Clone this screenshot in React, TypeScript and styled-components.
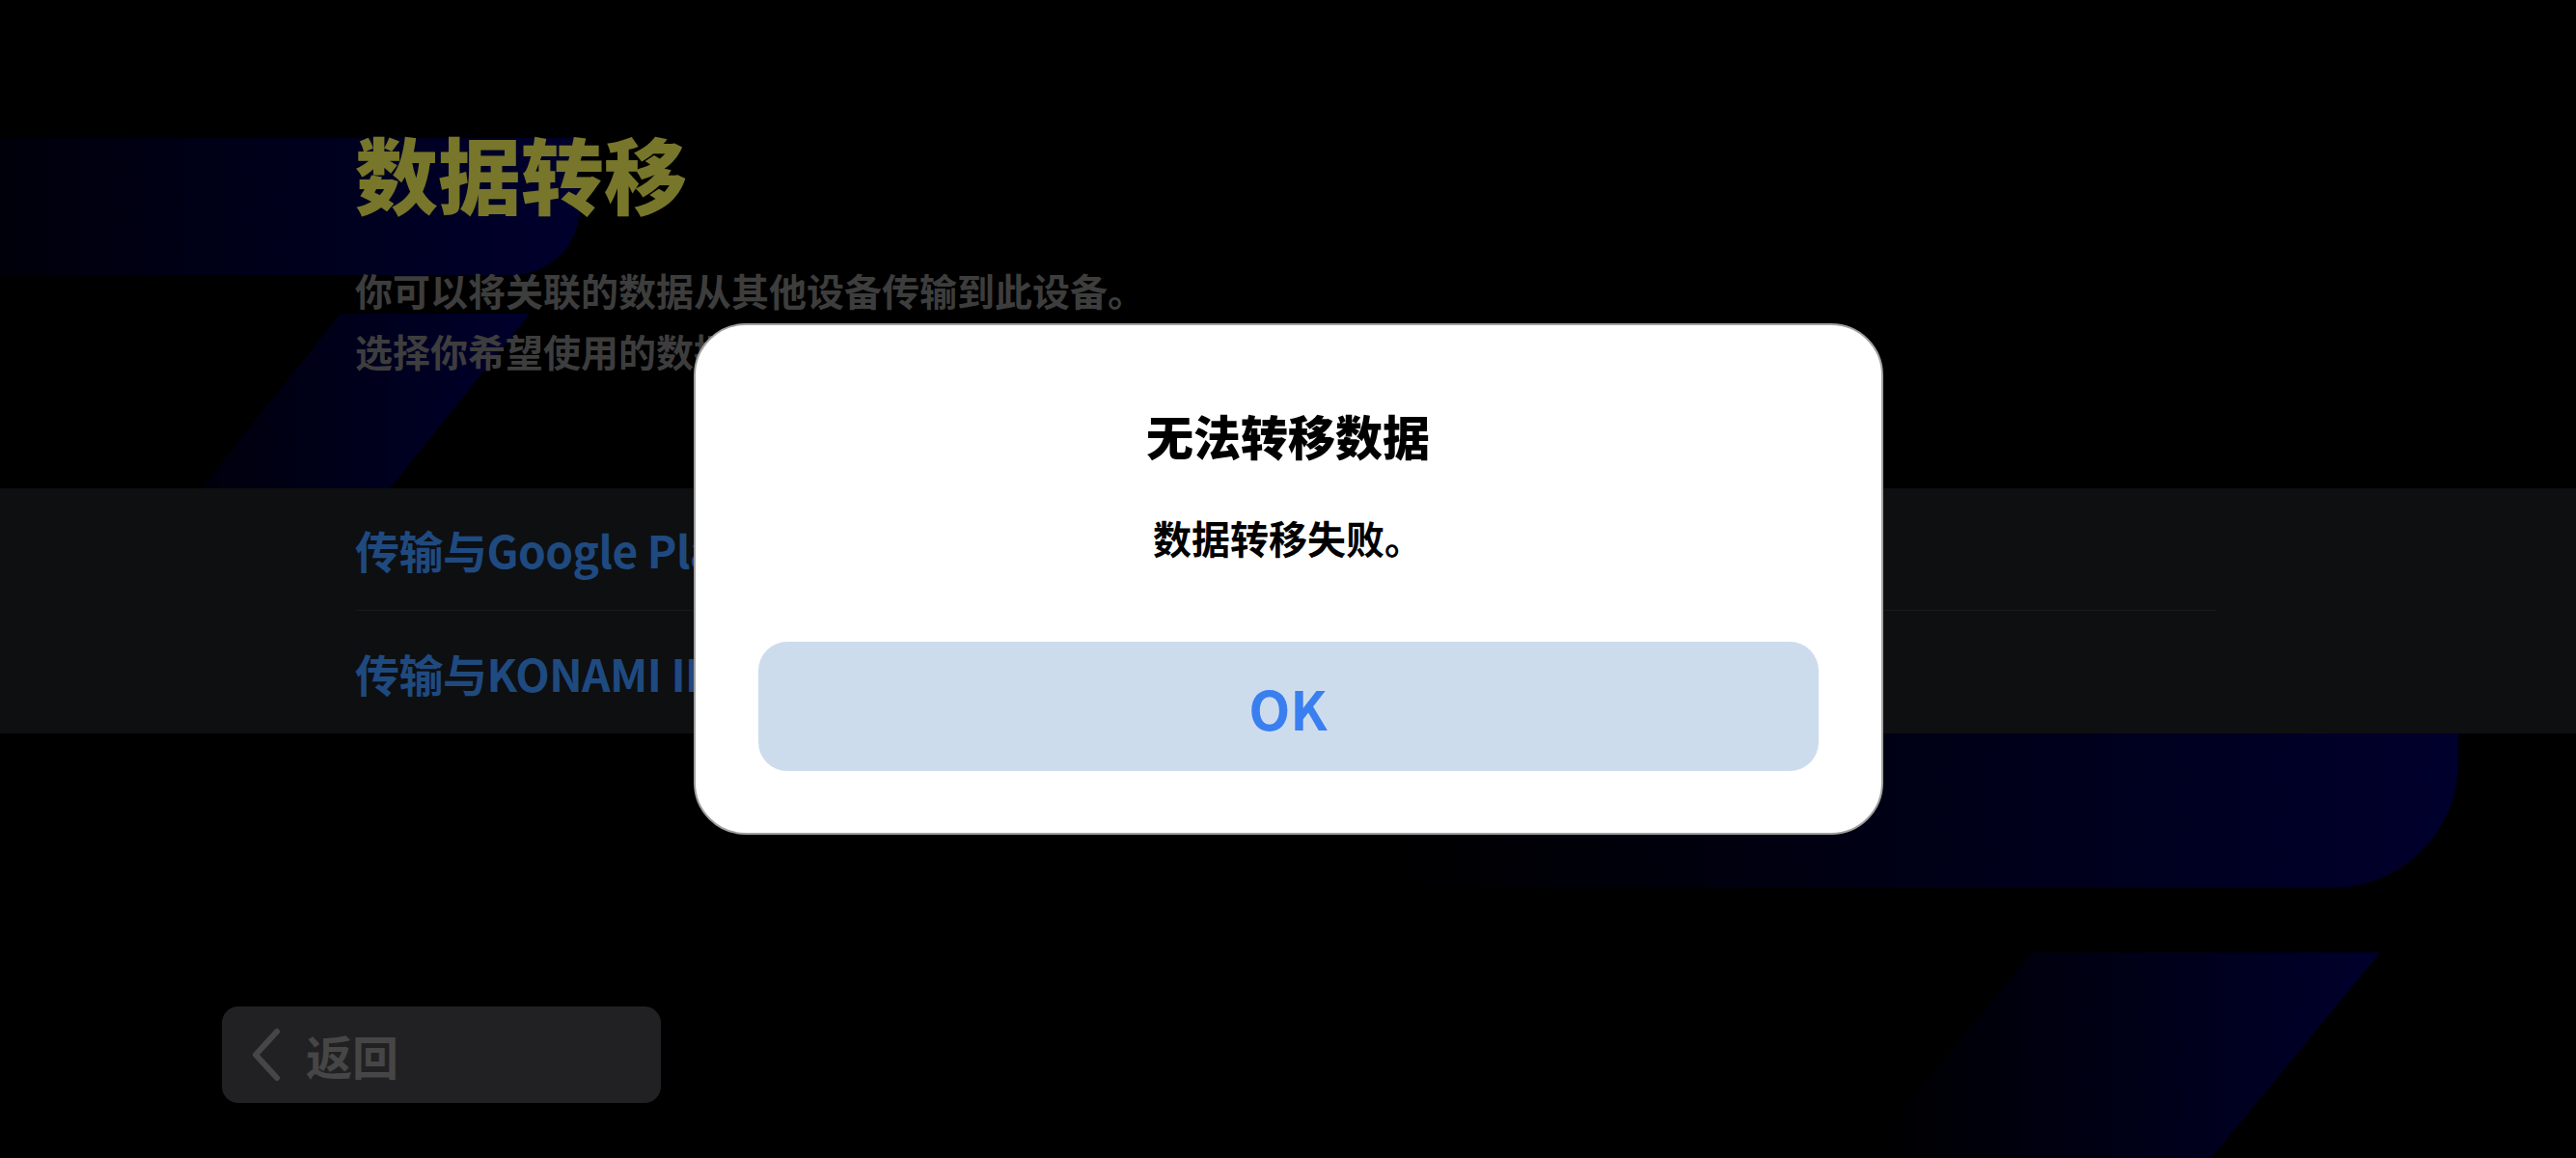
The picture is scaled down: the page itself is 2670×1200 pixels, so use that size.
import React from 'react'
import styled, { createGlobalStyle } from 'styled-components'

const GlobalStyle = createGlobalStyle`
  html, body {
    margin: 0;
    padding: 0;
    background: #000;
  }
  body {
    font-family: 'Noto Sans CJK SC', 'Noto Sans', sans-serif;
  }
  * {
    box-sizing: border-box;
  }
`

const options = ['传输与Google Play 游戏', '传输与KONAMI ID']

const App: React.FC = () => {
  return (
    <Screen>
      <GlobalStyle />
      <Backdrop viewBox="0 0 2670 1200" preserveAspectRatio="none">
        <defs>
          <linearGradient id="navyTop" x1="0" y1="0" x2="1" y2="0">
            <stop offset="0" stopColor="#000016" />
            <stop offset="1" stopColor="#00005a" />
          </linearGradient>
          <linearGradient id="navyBottom" x1="0" y1="0" x2="1" y2="0">
            <stop offset="0" stopColor="#000000" />
            <stop offset="1" stopColor="#00005a" />
          </linearGradient>
        </defs>
        {/* big "7" marks behind the page */}
        <path d="M0 143 H601 V215 A70 70 0 0 1 531 285 H0 Z" fill="url(#navyTop)" />
        <path d="M353 325 H549 L393 520 H197 Z" fill="url(#navyTop)" />
        <path d="M1420 640 H2548 V790 A130 130 0 0 1 2418 920 H1420 Z" fill="url(#navyBottom)" />
        <path d="M2106 987 H2467 L2292 1200 H1931 Z" fill="url(#navyBottom)" />
      </Backdrop>

      <Page>
        <Header>
          <Title>数据转移</Title>
          <Description>
            你可以将关联的数据从其他设备传输到此设备。
            <br />
            选择你希望使用的数据传输方式。
          </Description>
        </Header>

        <Band>
          <OptionList>
            {options.map((label, i) => (
              <Option key={label} $first={i === 0}>
                {label}
              </Option>
            ))}
          </OptionList>
        </Band>

        <Footer>
          <BackButton>
            <svg width="32" height="56" viewBox="0 0 32 56">
              <path
                d="M28 4 L6 28 L28 52"
                fill="none"
                stroke="currentColor"
                strokeWidth="6"
                strokeLinecap="round"
                strokeLinejoin="round"
              />
            </svg>
            <span>返回</span>
          </BackButton>
        </Footer>
      </Page>

      <Overlay>
        <Dialog>
          <DialogTitle>无法转移数据</DialogTitle>
          <DialogMessage>数据转移失败。</DialogMessage>
          <OkButton>OK</OkButton>
        </Dialog>
      </Overlay>
    </Screen>
  )
}

const Screen = styled.div`
  position: relative;
  width: 2670px;
  height: 1200px;
  overflow: hidden;
  background: #000;
`

const Backdrop = styled.svg`
  position: absolute;
  inset: 0;
  width: 100%;
  height: 100%;
`

const Page = styled.div`
  position: relative;
  display: flex;
  flex-direction: column;
  height: 100%;
`

const Header = styled.header`
  padding: 127px 0 0 368px;
`

const Title = styled.h1`
  margin: 0;
  font-size: 86px;
  line-height: 103px;
  font-weight: 900;
  color: #eeec54;
`

const Description = styled.p`
  margin: 39px 0 0;
  font-size: 39px;
  line-height: 63px;
  font-weight: 700;
  color: #7a7a7a;
`

const Band = styled.section`
  margin-top: 111px;
  background: #1c1e22;
`

const OptionList = styled.div`
  margin: 0 373px 0 368px;
`

const Option = styled.div<{ $first?: boolean }>`
  display: flex;
  align-items: center;
  height: ${(p) => (p.$first ? 126 : 128)}px;
  border-top: ${(p) => (p.$first ? 'none' : '1px solid #303238')};
  font-size: 46px;
  font-weight: 700;
  letter-spacing: -0.5px;
  color: #3e94ff;
`

const Footer = styled.footer`
  margin-top: 283px;
  padding-left: 230px;
`

const BackButton = styled.button`
  display: flex;
  align-items: center;
  gap: 26px;
  width: 455px;
  height: 100px;
  padding: 0 0 0 29px;
  border: none;
  border-radius: 17px;
  background: #424246;
  color: #8c8c8c;
  font-family: inherit;
  font-size: 48px;
  font-weight: 700;
`

const Overlay = styled.div`
  position: absolute;
  inset: 0;
  display: flex;
  align-items: center;
  justify-content: center;
  background: rgba(0, 0, 0, 0.5);
`

const Dialog = styled.div`
  display: flex;
  flex-direction: column;
  align-items: center;
  width: 1233px;
  padding: 84px 65px 64px;
  border: 2px solid #a0a0a0;
  border-radius: 54px;
  background: #fff;
`

const DialogTitle = styled.h2`
  margin: 0;
  font-size: 49px;
  line-height: 60px;
  font-weight: 900;
  color: #000;
`

const DialogMessage = styled.p`
  margin: 53px 0 0;
  font-size: 40px;
  line-height: 46px;
  font-weight: 700;
  color: #000;
`

const OkButton = styled.button`
  width: 100%;
  height: 134px;
  margin-top: 85px;
  border: none;
  border-radius: 30px;
  background: #cddced;
  color: #3a7ff0;
  font-family: inherit;
  font-size: 56px;
  font-weight: 700;
`

export default App
